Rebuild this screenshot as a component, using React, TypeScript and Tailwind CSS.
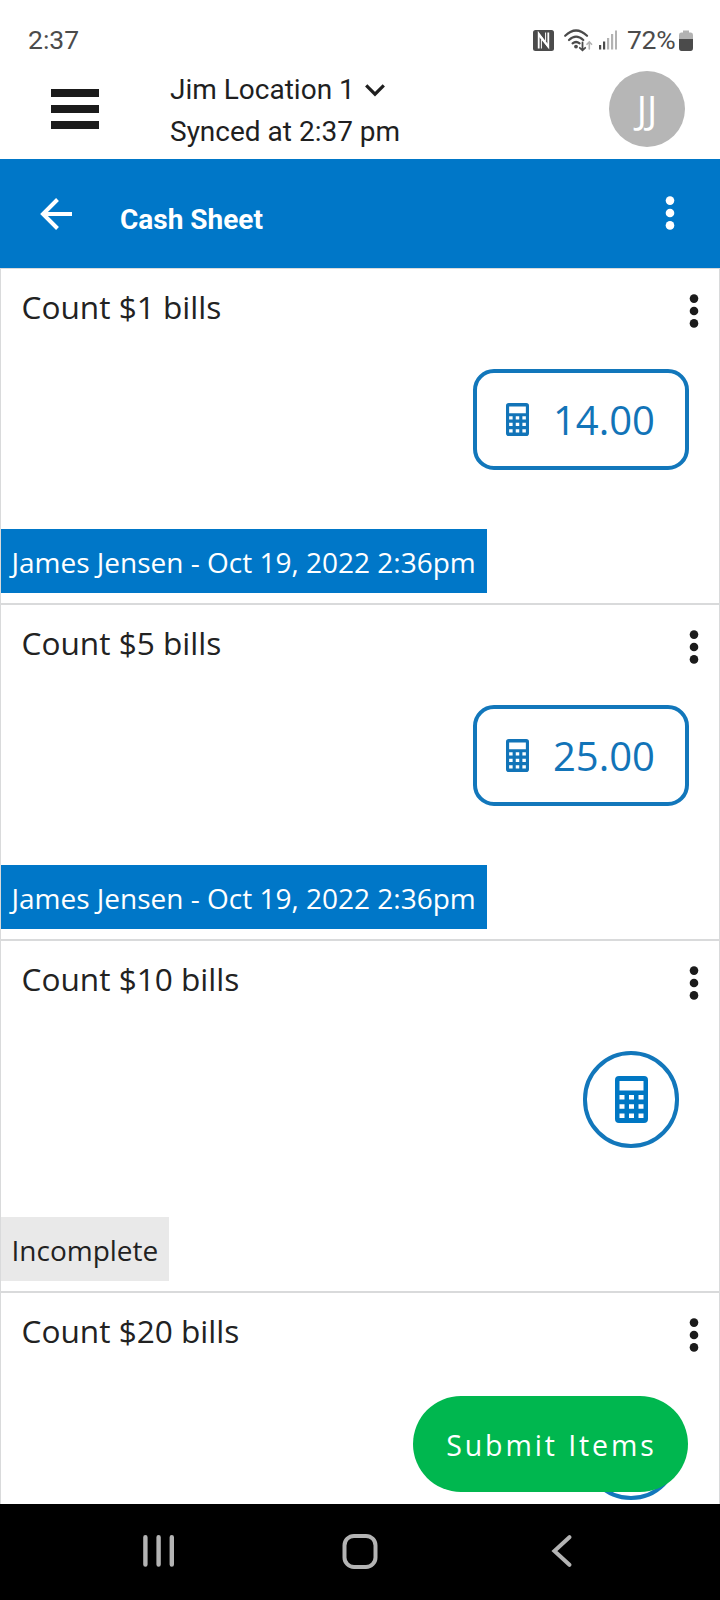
import React from "react";
import clsx from "clsx";

type CashItem = {
  id: number;
  title: string;
  value?: string;
  status?: string;
};

const CASH_ITEMS: CashItem[] = [
  { id: 1, title: "Count $1 bills", value: "14.00", status: "James Jensen - Oct 19, 2022 2:36pm" },
  { id: 2, title: "Count $5 bills", value: "25.00", status: "James Jensen - Oct 19, 2022 2:36pm" },
  { id: 3, title: "Count $10 bills", status: "Incomplete" },
  { id: 4, title: "Count $20 bills" },
];

function CalculatorIcon({ className }: { className?: string }) {
  return (
    <svg viewBox="0 0 33 47" className={className} fill="currentColor" preserveAspectRatio="none">
      <path
        fillRule="evenodd"
        d="M4 0H29Q33 0 33 4V43Q33 47 29 47H4Q0 47 0 43V4Q0 0 4 0ZM4.5 5V14.5H28.5V5ZM4.5 19V23.5H9.5V19ZM14 19V23.5H19V19ZM23.5 19V23.5H28.5V19ZM4.5 28.2V32.7H9.5V28.2ZM14 28.2V32.7H19V28.2ZM23.5 28.2V32.7H28.5V28.2ZM4.5 37.5V42H9.5V37.5ZM14 37.5V42H19V37.5ZM23.5 37.5V42H28.5V37.5Z"
      />
    </svg>
  );
}

function KebabIcon({ className }: { className?: string }) {
  return (
    <svg viewBox="0 0 10 34" className={clsx("h-[34px] w-[10px]", className)} fill="currentColor">
      <circle cx="5" cy="4.6" r="4.3" />
      <circle cx="5" cy="17" r="4.3" />
      <circle cx="5" cy="29.4" r="4.3" />
    </svg>
  );
}

function StatusBar() {
  return (
    <div className="flex h-[68px] shrink-0 items-center justify-between pl-[28px] pr-[27px] pt-[12px] text-[#4b4b4b]">
      <span className="text-[26.5px] leading-[30px]">2:37</span>
      <div className="flex items-center">
        {/* NFC */}
        <svg viewBox="0 0 21 21" className="h-[21px] w-[21px]">
          <rect width="21" height="21" rx="2.5" fill="#4b4b4b" />
          <path d="M5.7 18.5V3.6L15.3 16.8V2.5" fill="none" stroke="#fff" strokeWidth="1.8" />
          <path d="M5.7 3L15.3 14.5V18L5.7 6.5Z" fill="#fff" />
          <path d="M8.4 9.5V18.5M12.6 2.5V11.5" stroke="#fff" strokeWidth="1" />
        </svg>
        {/* Wi-Fi with data arrows */}
        <svg viewBox="0 0 30 24" className="ml-[9px] h-[24px] w-[30px]" fill="none" strokeLinecap="round">
          <g stroke="#4b4b4b" strokeWidth="2.2">
            <path d="M2.2 7.8Q13 -2.8 24 7.8" />
            <path d="M6 12Q13 5.2 20.3 12" />
            <path d="M9.6 15.4Q13 12.6 16.6 15.4" />
          </g>
          <circle cx="13" cy="18.6" r="1.9" fill="#4b4b4b" />
          <path d="M19.5 14.5V22M16.8 19.8L19.5 22.3L22.2 19.8" stroke="#4b4b4b" strokeWidth="1.8" />
          <path d="M26.3 21V14.2M24 16.3L26.3 14L28.6 16.3" stroke="#b2b2b2" strokeWidth="1.6" />
        </svg>
        {/* Signal strength */}
        <svg viewBox="0 0 18 20" className="ml-[6px] h-[20px] w-[18px]">
          <rect x="0" y="15" width="2.2" height="4.5" fill="#4b4b4b" />
          <rect x="4" y="11.5" width="2.2" height="8" fill="#4b4b4b" />
          <rect x="8" y="8" width="2.2" height="11.5" fill="#b2b2b2" />
          <rect x="12" y="4" width="2.2" height="15.5" fill="#b2b2b2" />
          <rect x="16" y="0.5" width="2" height="19" fill="#b2b2b2" />
        </svg>
        <span className="ml-[10px] w-[50px] text-[26.5px] leading-[30px] tracking-[-0.3px]">72%</span>
        <svg viewBox="0 0 14 21" className="ml-[2px] h-[21px] w-[14px]">
          <path d="M4 0.5H10V2.5H12Q14 2.5 14 5V9H0V5Q0 2.5 2 2.5H4Z" fill="#b2b2b2" />
          <path d="M0 9H14V18Q14 21 11.5 21H2.5Q0 21 0 18Z" fill="#4b4b4b" />
        </svg>
      </div>
    </div>
  );
}

function AppHeader() {
  return (
    <header className="flex h-[91px] shrink-0 items-start pl-[51px] pr-[35px] text-[#1f1f1f]">
      <button className="mt-[20.5px] flex w-12 flex-col gap-2">
        <span className="h-[8.3px] w-full bg-[#1b1b1b]" />
        <span className="h-[8.3px] w-full bg-[#1b1b1b]" />
        <span className="h-[8.3px] w-full bg-[#1b1b1b]" />
      </button>
      <div className="ml-[71px] mt-px grow whitespace-nowrap text-[28px] leading-[42px]">
        <div className="flex items-center">
          <span>Jim Location 1</span>
          <svg viewBox="0 0 20 13" className="ml-[10px] h-[13px] w-[20px]" fill="none" stroke="currentColor" strokeWidth="3.2">
            <path d="M1.2 1.4L10 10.2L18.8 1.4" />
          </svg>
        </div>
        <div>Synced at 2:37 pm</div>
      </div>
      <div className="mt-[3px] flex h-[76px] w-[76px] items-center justify-center rounded-full bg-[#b6b6b6] font-['Open_Sans',sans-serif] text-[38px] leading-none text-white">
        JJ
      </div>
    </header>
  );
}

function TitleBar() {
  return (
    <div className="flex h-[109px] shrink-0 items-center bg-[#0077c8] pl-[40px] pr-[45px] text-white">
      <svg viewBox="0 0 33 32" className="h-[32px] w-[33px]" fill="none" stroke="currentColor" strokeWidth="4">
        <path d="M32 16H3M17.5 1.5L3 16L17.5 30.5" />
      </svg>
      <h1 className="ml-[47px] mt-[12px] grow text-[28px] font-bold leading-[34px]">Cash Sheet</h1>
      <KebabIcon className="mb-px" />
    </div>
  );
}

function CashRow({ item }: { item: CashItem }) {
  const done = Boolean(item.value);

  return (
    <li
      className={clsx(
        "flex shrink-0 flex-col items-start border-b-2 border-[#d9dadb]",
        done ? "h-[336px]" : "h-[352px]"
      )}
    >
      <div className="flex w-full items-start justify-between pl-[20.5px] pr-[20px] pt-[16px] text-[#222]">
        <span className="text-[31.6px] leading-[44px]">{item.title}</span>
        <KebabIcon className="mt-[9px] text-[#1b1b1b]" />
      </div>

      {done ? (
        <button className="mr-[30px] mt-[40px] flex h-[101px] w-[216px] items-center self-end rounded-[21px] border-4 border-[#1277bb] pl-[29px] text-[#1274b8]">
          <CalculatorIcon className="h-[33px] w-[23px]" />
          <span className="ml-[24px] text-[40px] leading-[48px]">{item.value}</span>
        </button>
      ) : (
        <button className="mr-[40px] mt-[50px] flex h-[97px] w-[96px] items-center justify-center self-end rounded-full border-4 border-[#1277bb] text-[#0077c3]">
          <CalculatorIcon className="h-[47px] w-[33px]" />
        </button>
      )}

      {item.status && (
        <span
          className={clsx(
            "mb-[10px] mt-auto h-[64px] whitespace-nowrap pl-[10.5px] text-[28px] leading-[66px]",
            done ? "w-[486px] bg-[#0077c8] text-white" : "w-[168px] bg-[#e9e9e9] text-[#222]"
          )}
        >
          {item.status}
        </span>
      )}
    </li>
  );
}

function NavigationBar() {
  return (
    <nav className="flex h-24 shrink-0 items-start justify-between bg-black pl-[142px] pr-[148px] pt-[29px] text-[#b4b4b4]">
      <svg viewBox="0 0 33 36" className="h-[36px] w-[33px]" stroke="currentColor" strokeWidth="4.4" strokeLinecap="round">
        <path d="M3.4 4.2V31.6M16.6 4.2V31.6M29.8 4.2V31.6" />
      </svg>
      <svg viewBox="0 0 36 36" className="mr-[6px] h-[36px] w-[36px]" fill="none" stroke="currentColor" strokeWidth="4">
        <rect x="2.5" y="2.9" width="31" height="31" rx="9.5" />
      </svg>
      <svg viewBox="0 0 21 36" className="h-[36px] w-[21px]" fill="none" stroke="currentColor" strokeWidth="4" strokeLinecap="round">
        <path d="M18.4 4.2L3.4 18L18.4 31.8" />
      </svg>
    </nav>
  );
}

export default function App() {
  return (
    <div className="flex h-[1600px] w-[720px] flex-col overflow-hidden bg-white font-['Roboto',sans-serif]">
      <StatusBar />
      <AppHeader />
      <TitleBar />

      <main className="relative min-h-0 grow overflow-hidden font-['Open_Sans',sans-serif]">
        <ul className="flex flex-col border-x border-t border-[#d9dadb]">
          {CASH_ITEMS.map((item) => (
            <CashRow key={item.id} item={item} />
          ))}
        </ul>

        {/* Floating submit button */}
        <button className="absolute bottom-[12px] right-[32px] flex h-[96px] w-[275px] items-center justify-center rounded-full bg-[#00b74f] pl-[2px] pt-[2px] text-[28.5px] tracking-[2.9px] text-white">
          Submit Items
        </button>
      </main>

      <NavigationBar />
    </div>
  );
}
